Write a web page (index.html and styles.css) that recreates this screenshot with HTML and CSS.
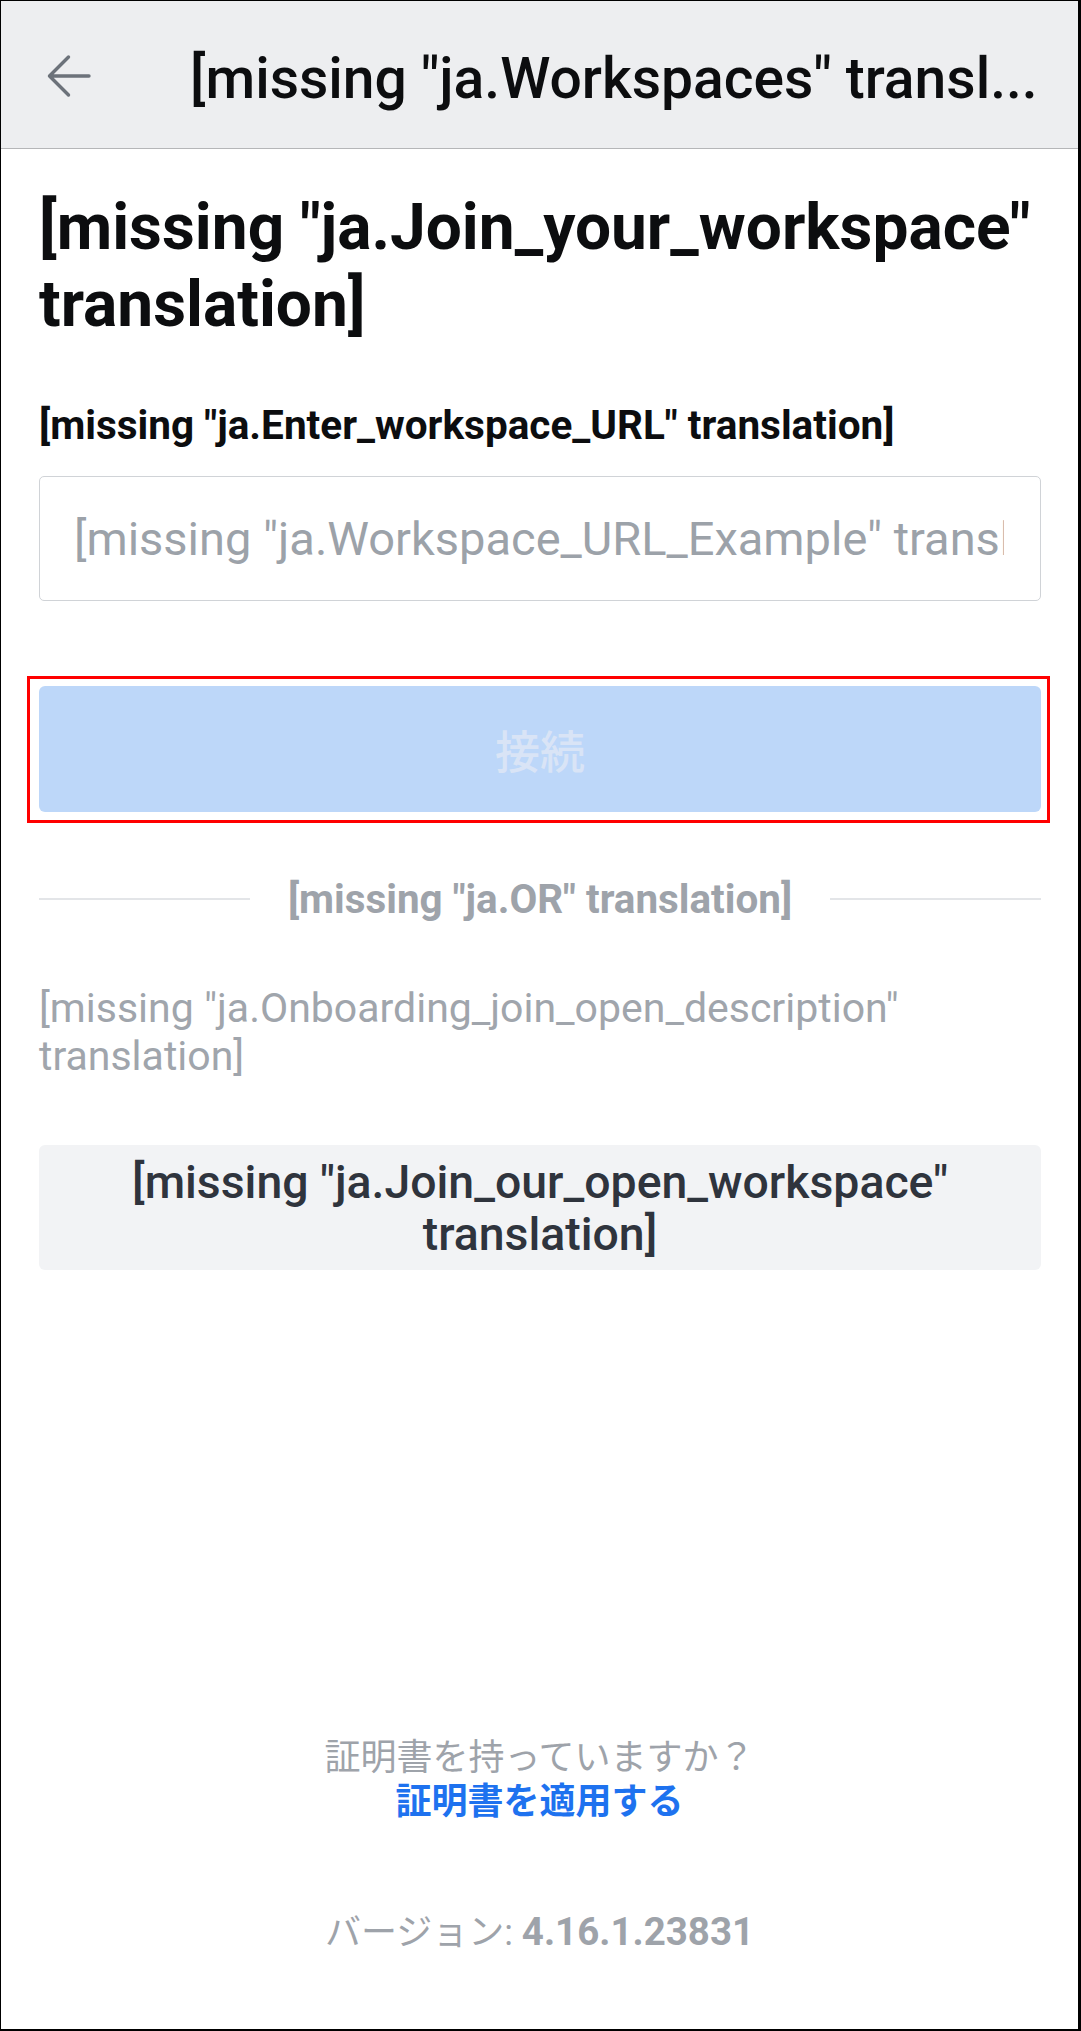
FILE: index.html
```html
<!DOCTYPE html>
<html lang="ja">
<head>
<meta charset="utf-8">
<title>Workspaces</title>
<link rel="stylesheet" href="styles.css">
</head>
<body>
<div class="frame">
  <header class="appbar">
    <span class="back">
      <svg width="44" height="44" viewBox="0 0 44 44" aria-hidden="true">
        <path d="M42 22H2.5M2.5 22L21.5 3M2.5 22L21.5 41" fill="none" stroke="#6c727a" stroke-width="3.4" stroke-linecap="round" stroke-linejoin="round"/>
      </svg>
    </span>
    <h2 class="appbar-title">[missing "ja.Workspaces" transl...</h2>
  </header>

  <main class="content">
    <h1 class="title">[missing "ja.Join_your_workspace" translation]</h1>
    <label class="label">[missing "ja.Enter_workspace_URL" translation]</label>
    <div class="input"><span class="placeholder">[missing "ja.Workspace_URL_Example" translation]</span></div>
    <div class="connect-wrap">
      <button class="connect">接続</button>
    </div>
    <div class="divider">
      <span class="line"></span>
      <span class="or">[missing "ja.OR" translation]</span>
      <span class="line"></span>
    </div>
    <p class="desc">[missing "ja.Onboarding_join_open_description" translation]</p>
    <button class="join-open">[missing "ja.Join_our_open_workspace" translation]</button>
  </main>

  <footer class="footer">
    <div class="cert-q">証明書を持っていますか？</div>
    <div class="cert-link">証明書を適用する</div>
    <div class="version">バージョン: <b>4.16.1.23831</b></div>
  </footer>
</div>
</body>
</html>
```

FILE: styles.css
```css
* { box-sizing: border-box; }
html, body { margin: 0; padding: 0; background: #fff; }
body {
  font-family: Roboto, "Noto Sans CJK JP", sans-serif;
  color: #0c0d0f;
}
.frame {
  width: 1081px;
  height: 2031px;
  border-style: solid;
  border-color: #000;
  border-width: 1px 3px 2px 1px;
  display: flex;
  flex-direction: column;
  overflow: hidden;
}
.appbar {
  height: 148px;
  flex: none;
  background: #edeef0;
  border-bottom: 1px solid #b5b6b8;
  display: flex;
  align-items: center;
  padding: 0 37px 0 46px;
}
.back {
  width: 44px;
  height: 44px;
  display: flex;
  margin-top: 2px;
  flex: none;
}
.appbar-title {
  margin: 8px 0 0 99px;
  font-size: 57px;
  font-weight: 500;
  white-space: nowrap;
  color: #0c0d0f;
}
.content {
  padding: 40px 37px 0 38px;
  display: flex;
  flex-direction: column;
}
.title {
  margin: 0;
  font-size: 64px;
  line-height: 77px;
  font-weight: 700;
  color: #0c0d0f;
}
.label {
  display: block;
  margin-top: 60px;
  font-size: 40.5px;
  line-height: 44px;
  font-weight: 700;
  color: #0c0d0f;
}
.input {
  margin-top: 29px;
  height: 125px;
  border: 1px solid #d0d3d7;
  border-radius: 5px;
  padding: 0 36px 0 34px;
  display: flex;
  align-items: center;
}
.placeholder {
  display: block;
  flex: 1;
  min-width: 0;
  font-size: 47px;
  color: #9ca2a9;
  white-space: nowrap;
  overflow: hidden;
}
.connect-wrap {
  margin-top: 85px;
  position: relative;
}
.connect-wrap::after {
  content: "";
  position: absolute;
  left: -12px;
  right: -9px;
  top: -10px;
  bottom: -11px;
  border: 3px solid #ff0000;
  pointer-events: none;
}
.connect {
  display: block;
  width: 100%;
  height: 126px;
  border: 0;
  border-radius: 6px;
  background: #bdd7f9;
  color: #d9e4f6;
  font-family: Roboto, "Noto Sans CJK JP", sans-serif;
  font-size: 45px;
  font-weight: 500;
}
.divider {
  margin-top: 64px;
  display: flex;
  align-items: center;
  gap: 38px;
  height: 46px;
}
.line {
  flex: 1;
  height: 2px;
  background: #e3e5e8;
}
.or {
  font-size: 40.4px;
  font-weight: 700;
  color: #9ea3aa;
  white-space: nowrap;
}
.desc {
  margin: 62px 0 0;
  font-size: 41px;
  line-height: 48px;
  color: #a0a5ac;
}
.join-open {
  margin-top: 65px;
  height: 125px;
  border: 0;
  border-radius: 6px;
  background: #f2f3f5;
  color: #2f343d;
  font-family: Roboto, "Noto Sans CJK JP", sans-serif;
  font-size: 46.4px;
  line-height: 52px;
  font-weight: 500;
  padding: 0 20px;
}
.footer {
  margin-top: auto;
  padding-bottom: 74px;
  text-align: center;
  font-size: 36px;
  line-height: 44px;
  color: #9ea3aa;
}
.cert-link {
  color: #1e72ef;
  font-weight: 700;
}
.version {
  margin-top: 86px;
}
.version b {
  font-weight: 700;
  font-size: 38.5px;
}
```
